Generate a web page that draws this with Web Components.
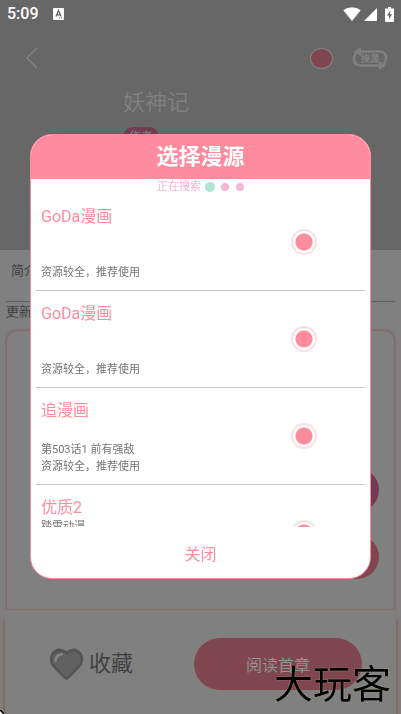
<!DOCTYPE html>
<html lang="zh-CN">
<head>
<meta charset="utf-8">
<meta name="viewport" content="width=device-width, initial-scale=1">
<title>妖神记</title>
<style>
html, body { margin: 0; height: 100%; }
body {
  --pink: #ff8c9e;
  --rose: #804650;
  --plum: #713b53;
  font-family: Roboto, "Noto Sans CJK SC", sans-serif;
  background: #808080;
  overflow: hidden;
}
</style>
</head>
<body>
<comic-app></comic-app>
<script>
const define = (name, html) => {
  const template = document.createElement('template');
  template.innerHTML = '<style>*{box-sizing:border-box}button{font:inherit;border:0;padding:0;margin:0;background:none}svg{display:block}</style>' + html;
  customElements.define(name, class extends HTMLElement {
    constructor() {
      super();
      this.attachShadow({ mode: 'open' }).append(template.content.cloneNode(true));
    }
  });
};

define('status-bar', `
<style>
:host { display: flex; align-items: center; height: 28px; padding: 0 7px; color: #fff; }
time { font-size: 16px; line-height: 28px; font-weight: 500; }
.app { margin-left: 14px; }
.right { display: flex; align-items: center; margin-left: auto; }
.signal { margin: 0 8px 0 3px; }
</style>
<time>5:09</time>
<svg class="app" width="11" height="12" viewBox="0 0 11 12"><rect width="11" height="12" rx="1" fill="#fff"/><path d="M3 8.500 5.500 2.500 8 8.500M3.800 6.800H7.200" fill="none" stroke="#676767" stroke-width="1.300"/><path d="M6 10h1m1 0h1" stroke="#676767" stroke-width="1"/></svg>
<div class="right">
<svg width="18" height="14" viewBox="0 0 18 14"><path d="M9 14 .3 3.200Q4 .2 9 .2t8.700 3Z" fill="#fff"/></svg>
<svg class="signal" width="13" height="14" viewBox="0 0 13 14"><path d="M0 14 13 1V14Z" fill="#fff"/></svg>
<svg width="9" height="15" viewBox="0 0 9 15"><path d="M0 1.500H3V0H6V1.500H9V14Q9 15 8 15H1Q0 15 0 14Z" fill="#fff"/><path d="M5.500 3.500 2 8.500H4V12.500L7 7.300H5Z" fill="#676767"/></svg>
</div>`);

define('comic-header', `
<style>
:host { display: block; height: 250px; background: #676767; color: #808080; }
nav { display: flex; align-items: center; height: 60px; padding: 0 13px 0 25px; }
.dot { width: 23px; height: 21px; margin: 0 19px 0 auto; border: 1px solid #858585; border-radius: 50%; background: var(--rose); }
h1 { margin: 0 0 0 123px; font-size: 22px; line-height: 30px; font-weight: 350; }
.tag { display: inline-block; margin: 9px 0 0 123px; padding: 0 6px; border-radius: 10px; background: var(--plum); font-size: 12px; line-height: 20px; }
</style>
<status-bar></status-bar>
<nav>
<button aria-label="返回"><svg width="14" height="22" viewBox="0 0 14 22"><path d="M12 1 2 11 12 21" fill="none" stroke="#858585" stroke-width="1.300"/></svg></button>
<button class="dot" aria-label="标记"></button>
<button aria-label="换源"><svg width="36" height="23" viewBox="0 0 36 23"><g fill="none" stroke="#808080" stroke-width="2.500"><path d="M6 4.500H27Q34 4.500 34 11Q34 14 32 17"/><path d="M30 18.500H9Q2 18.500 2 11.500Q2 8 4 6"/></g><path d="M2 4.500 9 0V9ZM34 18.500 27 14V23Z" fill="#808080"/><text x="9" y="15" font-size="9" font-weight="900" fill="#808080">换源</text></svg></button>
</nav>
<h1>妖神记</h1>
<span class="tag">作者</span>`);

define('comic-details', `
<style>
:host { display: flex; flex-direction: column; flex: 1; color: #3b3b3b; font-weight: 350; }
.intro { margin: 0 6px; padding: 12px 5px 21px; border-bottom: 1px solid #606060; font-size: 13px; line-height: 18px; }
.update { padding: 0 6px; font-size: 13px; line-height: 20px; }
.panel { flex: 1; display: flex; flex-direction: column; gap: 23px; align-items: flex-end; margin: 9px 7px 0; padding: 137px 15px 0; border-radius: 10px 10px 0 0; box-shadow: 0 0 3px 1px #805f68; }
.panel button { width: 112px; height: 44px; border-radius: 22px; background: var(--plum); }
.panel button + button { background: var(--rose); }
</style>
<div class="intro">简介</div>
<div class="update">更新</div>
<div class="panel"><button aria-label="章节"></button><button aria-label="下载"></button></div>`);

define('action-bar', `
<style>
:host { display: flex; align-items: center; height: 104px; margin: 0 5px; padding: 4px 34px 0 44px; background: #808080; box-shadow: 0 10px 5px #804a45, 0 -1px 1px #80706a; }
.save { display: flex; align-items: center; gap: 5px; color: #3b3b3b; font-size: 22px; line-height: 30px; font-weight: 350; }
.read { flex: 0 1 168px; height: 52px; margin-left: auto; border-radius: 26px; background: var(--rose); color: #969696; font-size: 16px; font-weight: 350; }
</style>
<button class="save"><svg width="35" height="34" viewBox="0 0 35 34"><path d="M17.500 33Q15.500 33 2.500 18.500Q-1 12 2.500 6Q9-2 17.500 4Q26-2 32.500 6Q36 12 32.500 18.500Q19.500 33 17.500 33Z" fill="#555"/><path d="M17.500 30Q15 28.500 4.500 17Q2 12 5 7.500Q10 2 17.500 7.500Q25 2 30 7.500Q33 12 30.500 17Q20 28.500 17.500 30Z" fill="#606060"/><path d="M6.500 14Q7 8 13 7" fill="none" stroke="#858585" stroke-width="2.500" stroke-linecap="round"/></svg>收藏</button>
<button class="read">阅读首章</button>`);

define('source-item', `
<style>
:host { display: flex; height: 97px; padding: 13px 48px 9px 5px; border-bottom: 1px solid #c8c8c8; flex: none; }
.text { flex: 1; display: flex; flex-direction: column; }
.name { font-size: 16px; line-height: 20px; color: var(--pink); }
.notes { margin-top: auto; font-size: 11px; line-height: 17px; color: #757575; }
:host([compact]) .notes { margin-top: 0; }
input { appearance: none; align-self: center; margin: 0 0 4px; width: 26px; height: 26px; border: 2px solid #ffdde2; border-radius: 50%; background: radial-gradient(circle, var(--pink) 8px, transparent 9px); }
</style>
<label class="text" for="pick"><span class="name"><slot name="name"></slot></span><span class="notes"><slot></slot></span></label>
<input id="pick" type="radio">`);

define('source-dialog', `
<style>
:host { display: block; border: 1px solid var(--pink); border-radius: 22px; background: #fff; overflow: hidden; }
h2 { margin: 0; background: var(--pink); color: #fff; font-size: 22px; line-height: 44px; font-weight: 700; text-align: center; }
.state { display: flex; align-items: center; justify-content: center; height: 15px; color: #f2b5d2; font-size: 11px; line-height: 15px; }
i { width: 8px; height: 8px; margin-left: 7px; border-radius: 50%; background: #f3b8d5; }
i:first-of-type { width: 10px; height: 10px; margin: 0 -1px 0 4px; background: #b1e3d2; }
.list { display: flex; flex-direction: column; height: 333px; margin: 0 5px; overflow: hidden; }
.close { display: block; width: 100%; height: 51px; color: var(--pink); font-size: 16px; }
p { margin: 0; }
</style>
<h2>选择漫源</h2>
<div class="state" role="status"><span>正在搜索</span><i></i><i></i><i></i></div>
<div class="list">
<source-item><span slot="name">GoDa漫画</span><p>资源较全，推荐使用</p></source-item>
<source-item><span slot="name">GoDa漫画</span><p>资源较全，推荐使用</p></source-item>
<source-item><span slot="name">追漫画</span><p>第503话1 前有强敌</p><p>资源较全，推荐使用</p></source-item>
<source-item compact><span slot="name">优质2</span><p>踏雪动漫</p></source-item>
</div>
<button class="close">关闭</button>`);

define('comic-app', `
<style>
:host { display: flex; flex-direction: column; min-height: 100%; }
.overlay { position: fixed; inset: 0; display: grid; align-content: center; padding: 0 30px 1px; }
.mark { position: fixed; right: 10px; bottom: 2px; color: #000; font-size: 39px; line-height: 54px; text-shadow: 0 0 1px #d8cf9a; }
.corner { position: fixed; left: 0; bottom: 0; }
</style>
<comic-header></comic-header>
<comic-details></comic-details>
<action-bar></action-bar>
<div class="overlay"><source-dialog role="dialog" aria-label="选择漫源"></source-dialog></div>
<span class="mark">大玩客</span>
<svg class="corner" width="4" height="4" viewBox="0 0 4 4"><path d="M0 0 4 4H0Z" fill="#fff"/><path d="M0 0 4 4" stroke="#000" stroke-width="1.500"/></svg>`);
</script>
</body>
</html>
